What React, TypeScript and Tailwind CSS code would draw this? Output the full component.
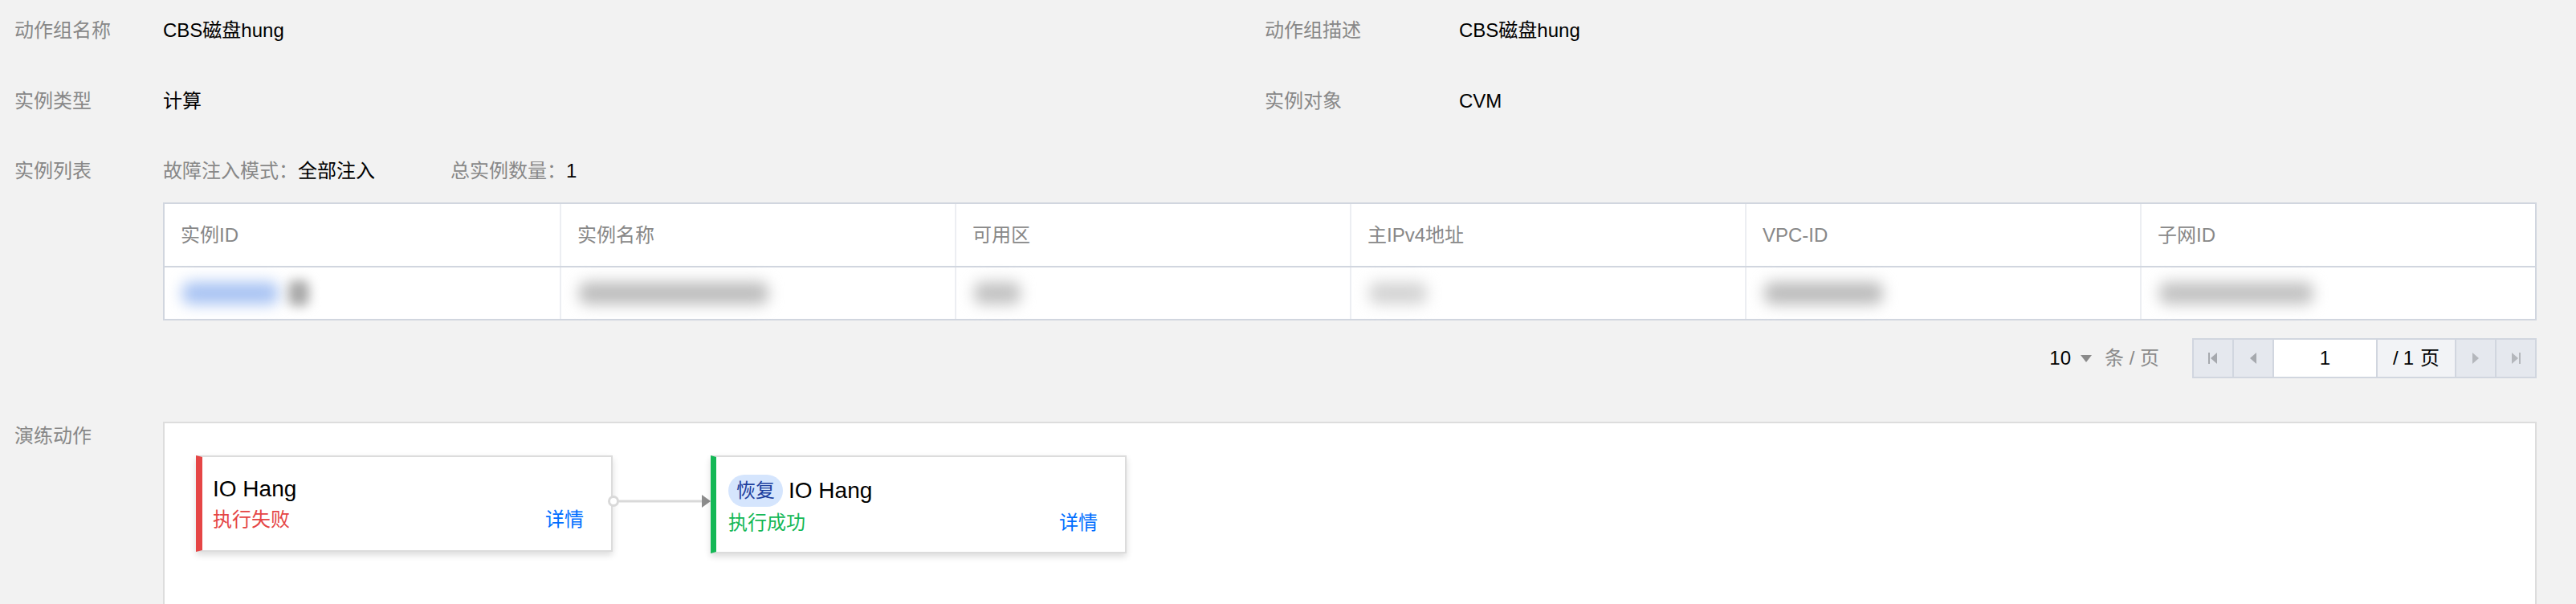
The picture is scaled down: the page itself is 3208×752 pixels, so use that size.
import React from "react";

const Label = ({ children, w = 185 }: { children: React.ReactNode; w?: number }) => (
  <div
    className={`${w === 185 ? "w-[185px]" : "w-[242px]"} shrink-0 text-[#888888] leading-[40px] h-[40px]`}
  >
    {children}
  </div>
);

const cols = ["实例ID", "实例名称", "可用区", "主IPv4地址", "VPC-ID", "子网ID"];

const BlurText = ({ w, color, extra }: { w: number; color: string; extra?: boolean }) => (
  <div className="flex items-center gap-[12px]">
    <span
      className="block h-[28px] rounded-[10px] blur-[9px]"
      style={{ width: w, background: color }}
    />
    {extra ? <span className="block h-[32px] w-[26px] rounded-[8px] bg-[#a9a9a9] blur-[7px]" /> : null}
  </div>
);

const cells = [
  { w: 120, color: "#a8c3f3", extra: true },
  { w: 236, color: "#bdbdbd" },
  { w: 58, color: "#c2c2c2" },
  { w: 72, color: "#d4d4d4" },
  { w: 148, color: "#bcbcbc" },
  { w: 192, color: "#c2c2c2" },
];

const PageBtn = ({ children, first }: { children: React.ReactNode; first?: boolean }) => (
  <div
    className={`h-full ${first ? "w-[48px]" : "w-[50px] border-l-2 border-[#d1d6df]"} bg-[#e5e8ee] flex items-center justify-center`}
  >
    {children}
  </div>
);

export default function App() {
  return (
    <div className="w-[3208px] h-[752px] overflow-hidden bg-[#f2f2f2] text-[24px] text-black font-['Liberation_Sans','Noto_Sans_CJK_SC',sans-serif]">
      <div className="pt-[18px] pl-[18px] pr-[49px]">
        {/* Row 1 */}
        <div className="grid grid-cols-[1557px_1fr]">
          <div className="flex">
            <Label>动作组名称</Label>
            <div className="leading-[40px]">CBS磁盘hung</div>
          </div>
          <div className="flex">
            <Label w={242}>动作组描述</Label>
            <div className="leading-[40px]">CBS磁盘hung</div>
          </div>
        </div>
        {/* Row 2 */}
        <div className="grid grid-cols-[1557px_1fr] mt-[48px]">
          <div className="flex">
            <Label>实例类型</Label>
            <div className="leading-[40px]">计算</div>
          </div>
          <div className="flex">
            <Label w={242}>实例对象</Label>
            <div className="leading-[40px]">CVM</div>
          </div>
        </div>
        {/* Row 3 */}
        <div className="flex mt-[47px]">
          <Label>实例列表</Label>
          <div className="flex-1 flex flex-col">
            <div className="h-[40px] leading-[40px] flex">
              <span className="text-[#888888]">故障注入模式：</span>
              <span>全部注入</span>
              <span className="text-[#888888] ml-[94px]">总实例数量：</span>
              <span>1</span>
            </div>
            <div className="mt-[19px] border-2 border-[#d1d6df] bg-white">
              <div className="grid grid-cols-6 h-[79px] border-b-2 border-[#d1d6df]">
                {cols.map((c, i) => (
                  <div
                    key={c}
                    className={`flex items-center pl-[20px] text-[#888888] ${i > 0 ? "border-l-2 border-[#eceef2]" : ""}`}
                  >
                    {c}
                  </div>
                ))}
              </div>
              <div className="grid grid-cols-6 h-[64px]">
                {cells.map((c, i) => (
                  <div
                    key={i}
                    className={`flex items-center pl-[22px] ${i > 0 ? "border-l-2 border-[#eceef2]" : ""}`}
                  >
                    <BlurText w={c.w} color={c.color} extra={c.extra} />
                  </div>
                ))}
              </div>
            </div>
            {/* Pagination */}
            <div className="mt-[22px] flex justify-end items-center h-[50px]">
              <span>10</span>
              <svg width="14" height="10" viewBox="0 0 14 10" className="ml-[12px]">
                <polygon points="0,1 14,1 7,10" fill="#8a8a8a" />
              </svg>
              <span className="ml-[16px] text-[#8a8a8a]">条 / 页</span>
              <div className="ml-[41px] h-[50px] flex border-2 border-[#d1d6df]">
                <PageBtn first>
                  <svg width="12" height="16" viewBox="0 0 12 16">
                    <rect x="0" y="1" width="2" height="14" fill="#a6a9ae" />
                    <polygon points="11,1 3,8 11,15" fill="#a6a9ae" />
                  </svg>
                </PageBtn>
                <PageBtn>
                  <svg width="10" height="16" viewBox="0 0 10 16">
                    <polygon points="9,1 1,8 9,15" fill="#a6a9ae" />
                  </svg>
                </PageBtn>
                <div className="w-[129px] h-full border-l-2 border-[#d1d6df] bg-white flex items-center justify-center">
                  1
                </div>
                <div className="w-[98px] h-full border-l-2 border-[#d1d6df] bg-[#f2f3f6] flex items-center justify-center">
                  <span>/</span>
                  <span className="ml-[6px]">1</span>
                  <span className="ml-[8px]">页</span>
                </div>
                <PageBtn>
                  <svg width="10" height="16" viewBox="0 0 10 16">
                    <polygon points="1,1 9,8 1,15" fill="#b4b7bc" />
                  </svg>
                </PageBtn>
                <PageBtn>
                  <svg width="12" height="16" viewBox="0 0 12 16">
                    <polygon points="1,1 9,8 1,15" fill="#b4b7bc" />
                    <rect x="10" y="1" width="2" height="14" fill="#b4b7bc" />
                  </svg>
                </PageBtn>
              </div>
            </div>
          </div>
        </div>
        {/* Section 2 */}
        <div className="flex mt-[52px]">
          <Label>演练动作</Label>
          <div className="flex-1 mt-[2px] h-[300px] border-2 border-[#dddddd] bg-white pt-[40px] pl-[39px]">
            <div className="flex items-start">
              {/* Card 1 */}
              <div className="w-[519px] h-[120px] bg-white border-t-2 border-r-2 border-b-2 border-[#dcdcdc] border-l-[8px] border-l-[#e54545] pl-[13px] pr-[34px] pt-[22px] shadow-[0_4px_8px_rgba(0,0,0,0.14)] flex flex-col">
                <div className="text-[28px] leading-[36px] h-[36px]">IO Hang</div>
                <div className="mt-[4px] flex justify-between leading-[32px]">
                  <span className="text-[#e54545]">执行失败</span>
                  <span className="text-[#006eff]">详情</span>
                </div>
              </div>
              {/* Connector */}
              <div className="w-[122px] h-[20px] mt-[47px] shrink-0">
                <svg width="122" height="20" viewBox="0 0 122 20" className="overflow-visible">
                  <line x1="7" y1="10" x2="112" y2="10" stroke="#d9d9d9" strokeWidth="3" />
                  <circle cx="1" cy="10" r="5.5" fill="#ffffff" stroke="#d9d9d9" strokeWidth="3" />
                  <polygon points="111,2 122,10 111,18" fill="#8c8c8c" />
                </svg>
              </div>
              {/* Card 2 */}
              <div className="w-[518px] h-[122px] bg-white border-t-2 border-r-2 border-b-2 border-[#dcdcdc] border-l-[7px] border-l-[#14b856] pl-[15px] pr-[34px] pt-[22px] shadow-[0_4px_8px_rgba(0,0,0,0.14)] flex flex-col">
                <div className="h-[40px] flex items-center">
                  <span className="h-[40px] px-[10px] rounded-full bg-[#d5e5fd] text-[#1c3f9e] leading-[40px]">恢复</span>
                  <span className="ml-[7px] text-[28px] leading-[36px]">IO Hang</span>
                </div>
                <div className="mt-[4px] flex justify-between leading-[32px]">
                  <span className="text-[#14b856]">执行成功</span>
                  <span className="text-[#006eff]">详情</span>
                </div>
              </div>
            </div>
          </div>
        </div>
      </div>
    </div>
  );
}
